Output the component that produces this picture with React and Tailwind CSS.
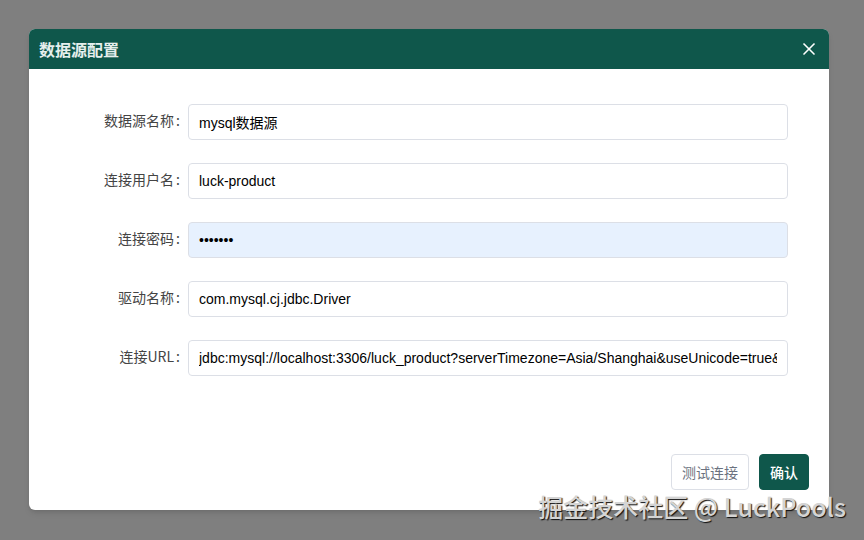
import { useState } from "react"
import { X } from "lucide-react"

const FIELDS = [
  { key: "name", label: "数据源名称", type: "text" },
  { key: "username", label: "连接用户名", type: "text" },
  { key: "password", label: "连接密码", type: "password" },
  { key: "driver", label: "驱动名称", type: "text" },
  { key: "url", label: "连接URL", type: "text" },
]

const INITIAL_VALUES = {
  name: "mysql数据源",
  username: "luck-product",
  password: "product",
  driver: "com.mysql.cj.jdbc.Driver",
  url: "jdbc:mysql://localhost:3306/luck_product?serverTimezone=Asia/Shanghai&useUnicode=true&characterEncoding=utf-8",
}

function FormField({ field, value, onChange }) {
  const isPassword = field.type === "password"

  return (
    <div className="flex items-center gap-2">
      <label htmlFor={field.key} className="w-31 shrink-0 pb-1 text-right text-sm text-[#444]">
        {field.label}
        <span className="ml-0.5">:</span>
      </label>
      <input
        id={field.key}
        type={field.type}
        value={value}
        onChange={(e) => onChange(field.key, e.target.value)}
        className={`h-9 min-w-0 flex-1 rounded border border-[#dcdfe6] px-2.5 text-sm text-black outline-none font-['Liberation_Sans','Noto_Sans_CJK_SC',sans-serif] ${
          isPassword ? "bg-[#e7f1fe]" : "bg-white"
        }`}
      />
    </div>
  )
}

export default function App() {
  const [values, setValues] = useState(INITIAL_VALUES)
  const [open, setOpen] = useState(true)

  const handleChange = (key, value) => {
    setValues((prev) => ({ ...prev, [key]: value }))
  }

  return (
    <div className="relative min-h-screen bg-[#7f7f7f] pt-[29px] pr-[35px] pb-[30px] pl-[29px] font-['Noto_Sans_CJK_SC',sans-serif]">
      {open && (
        <div role="dialog" aria-labelledby="dialog-title" className="overflow-hidden rounded-md bg-white shadow-md">
          {/* Header */}
          <div className="flex h-10 items-center justify-between bg-[#0f574b] px-2.5 text-white">
            <h1 id="dialog-title" className="text-base font-bold text-[#e6efed]">
              数据源配置
            </h1>
            <button type="button" aria-label="关闭" onClick={() => setOpen(false)}>
              <X size={20} strokeWidth={2} />
            </button>
          </div>

          <form onSubmit={(e) => e.preventDefault()}>
            <div className="flex flex-col gap-[23px] pt-[35px] pr-[41px] pl-[27px]">
              {FIELDS.map((field) => (
                <FormField key={field.key} field={field} value={values[field.key]} onChange={handleChange} />
              ))}
            </div>

            {/* Footer */}
            <div className="flex justify-end gap-2.5 px-5 pt-[78px] pb-5">
              <button
                type="button"
                className="h-9 rounded border border-[#dcdfe6] bg-white px-2.5 text-sm text-[#6b7280]"
              >
                测试连接
              </button>
              <button
                type="submit"
                className="h-9 rounded border border-[#0f574b] bg-[#0f574b] px-2.5 text-sm font-medium text-white"
              >
                确认
              </button>
            </div>
          </form>
        </div>
      )}

      <div className="pointer-events-none absolute right-[18px] bottom-3.5 text-[25px] leading-10 font-medium whitespace-nowrap text-[#d4d4d4] [text-shadow:1px_1px_1px_#111]">
        掘金技术社区 @ LuckPools
      </div>
    </div>
  )
}
